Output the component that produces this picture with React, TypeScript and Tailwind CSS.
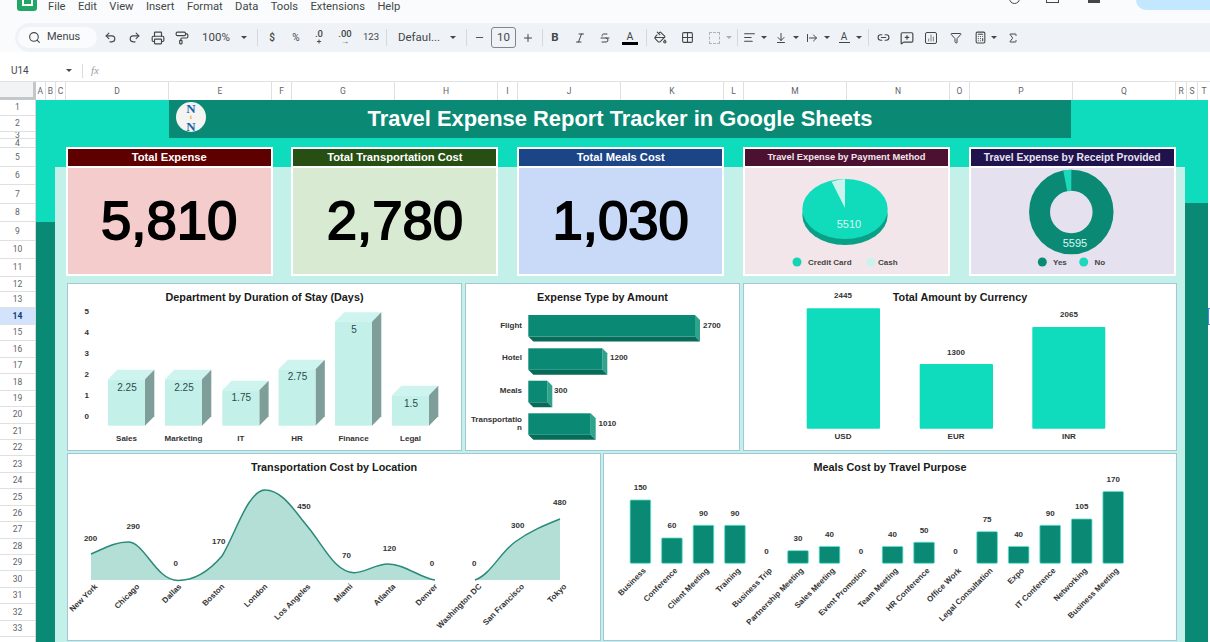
import React from "react";
import {
  Undo2, Redo2, Printer, PaintRoller, Search, Minus, Plus, Italic, Strikethrough, PaintBucket, Grid2x2,
  AlignLeft, ArrowDownToLine, ArrowRightFromLine, Link2, MessageSquarePlus, ChartNoAxesColumn, Filter, Calculator, Sigma,
} from "lucide-react";

const DARK = "#0a8a74";
const FONT = "'Liberation Sans', Arial, sans-serif";

const Caret = ({ c = "" }: { c?: string }) => (
  <div className={`shrink-0 flex justify-center w-[8px] ${c}`}>
    <div className="w-0 h-0 border-x-[3px] border-x-transparent border-t-[3px] border-t-[#444746]" />
  </div>
);
const Sep = ({ c = "" }: { c?: string }) => <div className={`shrink-0 w-[1px] h-[17px] bg-[#d5d9de] ${c}`} />;
const T = ({ c = "", children }: { c?: string; children: React.ReactNode }) => (
  <div className={`shrink-0 flex items-center justify-center text-[#444746] ${c}`}>{children}</div>
);

const columns = [
  ["A", "w-[10.5px]"], ["B", "w-[10px]"], ["C", "w-[10px]"], ["D", "w-[103px]"], ["E", "w-[103px]"], ["F", "w-[20px]"],
  ["G", "w-[103px]"], ["H", "w-[103px]"], ["I", "w-[20px]"], ["J", "w-[103px]"], ["K", "w-[103px]"], ["L", "w-[20px]"],
  ["M", "w-[103px]"], ["N", "w-[103px]"], ["O", "w-[20px]"], ["P", "w-[103px]"], ["Q", "w-[103px]"], ["R", "w-[11px]"],
  ["S", "w-[11px]"], ["T", "w-[13px]"],
];

const rowHeights = ["h-[16px]", "h-[16px]", "h-[7px]", "h-[9px]", "h-[19px]", "h-[18px]", "h-[19px]", "h-[18px]", "h-[19px]", "h-[18px]", "h-[18px]", "h-[15px]"];
const rows = Array.from({ length: 33 }, (_, i) => ({ n: i + 1, h: rowHeights[i] ?? "h-[16.45px]" }));

const Kpi = ({ title, value, head, body }: { title: string; value: string; head: string; body: string }) => (
  <div className="w-[207px] h-[129px] shrink-0 border-2 border-white bg-white flex flex-col">
    <div className={`h-[17px] shrink-0 flex items-center justify-center text-white font-bold text-[11.2px] ${head}`}>{title}</div>
    <div className={`mt-[2px] flex-1 flex items-center justify-center text-black text-[54.5px] font-normal [-webkit-text-stroke:1.8px_black] leading-none ${body}`}>{value}</div>
  </div>
);

const L = (p: React.SVGProps<SVGTextElement>) => (
  <text textAnchor="middle" dominantBaseline="central" fontSize={8} fontWeight={700} fill="#333" fontFamily={FONT} {...p} />
);

const Chart = ({ title, c, vb, children }: { title: string; c: string; vb: string; children: React.ReactNode }) => {
  const [, , w, h] = vb.split(" ");
  return (
    <div className={`shrink-0 h-full bg-white border border-[#a3c6d8] flex flex-col ${c}`}>
      <div className="h-[26px] shrink-0 flex items-center justify-center text-[10.8px] font-bold text-[#1a1a1a]">{title}</div>
      <svg viewBox={vb} width={w} height={h} className="block overflow-visible">{children}</svg>
    </div>
  );
};

const dept = [
  { n: "Sales", v: "2.25", x: 108, t: 379.3, vy: 387 },
  { n: "Marketing", v: "2.25", x: 165, t: 379.3, vy: 387 },
  { n: "IT", v: "1.75", x: 222.3, t: 390.3, vy: 397.5 },
  { n: "HR", v: "2.75", x: 278.5, t: 369.3, vy: 376.5 },
  { n: "Finance", v: "5", x: 335, t: 321.7, vy: 329 },
  { n: "Legal", v: "1.5", x: 392, t: 395.3, vy: 403 },
];
const expense = [
  { n: "Flight", v: "2700", x2: 695, y: 315, ly: 325, vx: 703 },
  { n: "Hotel", v: "1200", x2: 602.3, y: 348.3, ly: 357, vx: 610 },
  { n: "Meals", v: "300", x2: 547.3, y: 380.7, ly: 390.5, vx: 554 },
  { n: "", v: "1010", x2: 590.7, y: 413.3, ly: 423, vx: 598.5 },
];
const locVals: [string, number, number][] = [
  ["200", 90.6, 538], ["290", 133.3, 526.7], ["0", 175.7, 563.7], ["170", 218.8, 541.7], ["450", 304, 506.7], ["70", 346.4, 555],
  ["120", 389.5, 548.7], ["0", 432, 563.7], ["0", 474.3, 563.7], ["300", 517.8, 525.3], ["480", 559.8, 502.7],
];
const locNames: [string, number][] = [
  ["New York", 95], ["Chicago", 137], ["Dallas", 179], ["Boston", 222], ["London", 265], ["Los Angeles", 308], ["Miami", 350],
  ["Atlanta", 393], ["Denver", 435], ["Washington DC", 479], ["San Francisco", 521.6], ["Tokyo", 564],
];
const meals: [string, number][] = [
  ["Business", 150], ["Conference", 60], ["Client Meeting", 90], ["Training", 90], ["Business Trip", 0], ["Partnership Meeting", 30],
  ["Sales Meeting", 40], ["Event Promotion", 0], ["Team Meeting", 40], ["HR Conference", 50], ["Office Work", 0], ["Legal Consultation", 75],
  ["Expo", 40], ["IT Conference", 90], ["Networking", 105], ["Business Meeting", 170],
];

export default function App() {
  return (
    <div className="w-[1210px] h-[642px] overflow-hidden bg-white flex flex-col font-['Liberation_Sans',Arial,sans-serif]">
      {/* Menu bar */}
      <div className="h-[23px] shrink-0 bg-[#f9fbfd] flex items-start font-['Roboto',sans-serif]">
        <div className="ml-[17px] w-[20px] h-[11px] rounded-b-[3px] bg-[#23a566] flex justify-center">
          <div className="w-[11px] h-[6px] border-x-2 border-b-2 border-white" />
        </div>
        <div className="ml-[11px] flex gap-[12.4px] text-[11.2px] leading-[14px] text-[#444746]">
          {["File", "Edit", "View", "Insert", "Format", "Data", "Tools", "Extensions", "Help"].map((m) => <span key={m}>{m}</span>)}
        </div>
        <div className="ml-auto flex items-start">
          <div className="w-[11px] h-[4px] overflow-hidden"><div className="w-[11px] h-[11px] -mt-[7px] rounded-full border-[1.5px] border-[#444746]" /></div>
          <div className="ml-[26px] w-[13px] h-[3px] border-x-[1.5px] border-b-[1.5px] border-[#444746]" />
          <div className="ml-[29px] w-[12px] h-[3px] bg-[#444746]" />
          <div className="ml-[36px] w-[74px] h-[10px] rounded-bl-[10px] bg-[#c2e7ff]" />
        </div>
      </div>

      {/* Toolbar */}
      <div className="h-[29px] shrink-0 bg-[#f9fbfd] pl-[15px]">
        <div className="h-full rounded-l-[15px] bg-[#eff3f8] flex items-center font-['Roboto',sans-serif] text-[11.5px]">
          <div className="ml-[3px] w-[79px] h-[21px] rounded-full bg-[#f9fbfd] flex items-center pl-[10px] gap-[6px] text-[#444746] shrink-0">
            <Search size={13} /><span className="text-[11px]">Menus</span>
          </div>
          <T c="w-[24px] ml-[1px]"><Undo2 size={13} /></T>
          <T c="w-[24px]"><Redo2 size={13} /></T>
          <T c="w-[24px]"><Printer size={14} /></T>
          <T c="w-[24px]"><PaintRoller size={14} /></T>
          <T c="w-[40px] ml-[2px]">100%</T>
          <Caret c="ml-[4px]" />
          <Sep c="ml-[9px]" />
          <T c="w-[20px] ml-[4px] text-[10px] font-medium">$</T>
          <T c="w-[20px] ml-[4px] text-[10px]">%</T>
          <T c="w-[20px] ml-[3px] flex-col text-[9.5px] font-medium leading-[8px]"><span>.0</span><span className="text-[8px]">+</span></T>
          <T c="w-[24px] ml-[4px] flex-col text-[9.5px] font-medium leading-[8px]"><span>.00</span><span className="text-[8px]">→</span></T>
          <T c="w-[24px] ml-[2px] text-[9.5px]">123</T>
          <Sep c="ml-[3px]" />
          <T c="w-[56px] ml-[4px]">Defaul...</T>
          <Caret c="ml-[2px]" />
          <Sep c="ml-[9px]" />
          <T c="w-[16px] ml-[4px]"><Minus size={11} /></T>
          <T c="w-[25px] h-[21px] ml-[4px] border border-[#80868b] rounded-[3px] text-[11.5px]">10</T>
          <T c="w-[16px] ml-[4px]"><Plus size={12} /></T>
          <Sep c="ml-[6px]" />
          <T c="w-[20px] ml-[2px] font-bold text-[11.5px]">B</T>
          <T c="w-[20px] ml-[5px]"><Italic size={12} /></T>
          <T c="w-[20px] ml-[5px]"><Strikethrough size={12} /></T>
          <T c="w-[20px] ml-[5px] flex-col">
            <span className="text-[10.5px] leading-[11px]">A</span>
            <div className="w-[16px] h-[3px] bg-black" />
          </T>
          <Sep c="ml-[6px]" />
          <T c="w-[20px] ml-[3px]"><PaintBucket size={13} /></T>
          <T c="w-[20px] ml-[7px]"><Grid2x2 size={13} /></T>
          <T c="w-[20px] ml-[7px]"><div className="w-[11px] h-[12px] border border-dashed border-[#b0b5ba]" /></T>
          <Caret c="ml-[1px] opacity-40" />
          <Sep c="ml-[4px]" />
          <T c="w-[16px] ml-[3px]"><AlignLeft size={13} /></T>
          <Caret c="ml-[3px]" />
          <T c="w-[16px] ml-[5px]"><ArrowDownToLine size={12} /></T>
          <Caret c="ml-[3px]" />
          <T c="w-[16px] ml-[4px]"><ArrowRightFromLine size={12} /></T>
          <Caret c="ml-[3px]" />
          <T c="w-[16px] ml-[5px] flex-col">
            <span className="text-[10px] leading-[10px]">A</span>
            <div className="w-[11px] h-[1.5px] bg-[#444746]" />
          </T>
          <Caret c="ml-[3px]" />
          <Sep c="ml-[5px]" />
          <T c="w-[20px] ml-[4px]"><Link2 size={13} /></T>
          <T c="w-[20px] ml-[4px]"><MessageSquarePlus size={14} /></T>
          <T c="w-[20px] ml-[4px]"><div className="w-[12px] h-[12px] rounded-[2px] border border-[#444746] flex items-center justify-center"><ChartNoAxesColumn size={8} /></div></T>
          <T c="w-[20px] ml-[5px]"><Filter size={12} /></T>
          <T c="w-[20px] ml-[4px]"><Calculator size={13} /></T>
          <Caret />
          <T c="w-[16px] ml-[7px]"><Sigma size={12} /></T>
        </div>
      </div>

      {/* Formula bar */}
      <div className="h-[29px] shrink-0 bg-white flex items-center pt-[8px] font-['Roboto',sans-serif]">
        <span className="ml-[11px] w-[54px] text-[10px] text-[#444746]">U14</span>
        <Caret />
        <div className="ml-[9px] w-[1px] h-[14px] bg-[#dadce0]" />
        <span className="ml-[8px] text-[11px] italic text-[#9aa0a6] font-['Liberation_Serif',serif]">fx</span>
      </div>

      {/* Column header */}
      <div className="h-[19px] shrink-0 flex bg-white border-t border-[#dfe1e4] text-[8.5px] text-[#5f6368] font-['Roboto',sans-serif]">
        <div className="w-[35.5px] shrink-0 bg-[#f1f3f4] border-r-[3px] border-b-[3px] border-[#c4c7c9]" />
        {columns.map(([l, w]) => (
          <div key={l} className={`${w} shrink-0 flex items-center justify-center border-r border-[#e0e0e0]`}>{l}</div>
        ))}
      </div>

      {/* Sheet */}
      <div className="flex-1 min-h-0 flex">
        <div className="w-[36px] shrink-0 flex flex-col font-['Roboto',sans-serif] text-[8.5px] text-[#5f6368] border-r border-[#d5d7d9]">
          {rows.map((r) => (
            <div key={r.n} className={`${r.h} shrink-0 overflow-hidden flex items-center justify-center border-b border-[#e0e0e0] ${r.n === 14 ? "bg-[#d3e3fd] font-bold text-[#0b3d74]" : "bg-white"}`}>{r.n}</div>
          ))}
        </div>

        <div className="w-[1172px] shrink-0 bg-[#0fdcbc] flex flex-col">
          <div className="h-[38px] shrink-0 pl-[133px]">
            <div className="w-[902px] h-full bg-[#0a8a74] flex items-center">
              <div className="ml-[7px] mb-[4px] w-[30px] h-[30px] shrink-0 rounded-full bg-[#f4f5f3] flex flex-col items-center justify-center font-['Liberation_Serif',serif] font-bold text-[#1c5fa8] leading-[9px] text-[13px]">
                <span>N</span><span className="text-[7px] text-[#f0a820]">t</span><span>N</span>
              </div>
              <div className="flex-1 pr-[37px] text-center text-white font-bold text-[21.9px] leading-none">Travel Expense Report Tracker in Google Sheets</div>
            </div>
          </div>
          <div className="h-[29px] shrink-0" />
          <div className="flex-1 min-h-0 flex">
            <div className="w-[19px] shrink-0 flex flex-col">
              <div className="h-[55px] shrink-0" />
              <div className="flex-1 bg-[#0a8a74]" />
            </div>
            <div className="w-[1130px] shrink-0 bg-[#c3f1e9] flex flex-col">
              <div className="-mt-[20px] ml-[10.7px] flex gap-[18.75px] shrink-0">
                <Kpi title="Total Expense" value="5,810" head="bg-[#5f0000]" body="bg-[#f4cccc]" />
                <Kpi title="Total Transportation Cost" value="2,780" head="bg-[#274e13]" body="bg-[#d9ead3]" />
                <Kpi title="Total Meals Cost" value="1,030" head="bg-[#1c4587]" body="bg-[#c9daf8]" />
                <div className="w-[207px] h-[129px] shrink-0 border-2 border-white bg-white flex flex-col">
                  <div className="h-[17px] shrink-0 flex items-center justify-center text-[#f3e6ea] font-bold text-[9.3px] bg-[#4c1130]">Travel Expense by Payment Method</div>
                  <svg viewBox="745 168 203 106" width="203" height="106" className="block mt-[2px] bg-[#f3e6ea]">
                    <ellipse cx="845" cy="215" rx="42.7" ry="30" fill="#0aa088" />
                    <ellipse cx="845" cy="209" rx="42.7" ry="30" fill="#10dcbc" />
                    <polygon points="845,208 831.7,181.7 838,180 845,179" fill="#c9f3ec" />
                    <text x="849" y="224" textAnchor="middle" dominantBaseline="central" fontSize="11" fill="#d8f8f2" fontFamily={FONT}>5510</text>
                    <circle cx="797" cy="262" r="4.5" fill="#16d3b5" />
                    <L x="808" y="262" textAnchor="start" fill="#444">Credit Card</L>
                    <circle cx="870.7" cy="262" r="4.5" fill="#c9f3ec" />
                    <L x="878" y="262" textAnchor="start" fill="#444">Cash</L>
                  </svg>
                </div>
                <div className="w-[207px] h-[129px] shrink-0 border-2 border-white bg-white flex flex-col">
                  <div className="h-[17px] shrink-0 flex items-center justify-center text-[#e8e4f0] font-bold text-[10.3px] bg-[#20124d]">Travel Expense by Receipt Provided</div>
                  <svg viewBox="971 168 203 106" width="203" height="106" className="block mt-[2px] bg-[#e5e1ee]">
                    <circle cx="1071.3" cy="212" r="31.75" fill="none" stroke="#0a8a74" strokeWidth="21" />
                    <path d="M1065.2 180.8 A31.75 31.75 0 0 1 1071.3 180.25" fill="none" stroke="#1dd9bb" strokeWidth="21" />
                    <text x="1075" y="243" textAnchor="middle" dominantBaseline="central" fontSize="11" fill="#d8f8f2" fontFamily={FONT}>5595</text>
                    <circle cx="1042.3" cy="262" r="4.5" fill="#0a8a74" />
                    <L x="1053" y="262" textAnchor="start" fill="#444">Yes</L>
                    <circle cx="1083.7" cy="262" r="4.5" fill="#1dd9bb" />
                    <L x="1094.6" y="262" textAnchor="start" fill="#444">No</L>
                  </svg>
                </div>
              </div>

              <div className="mt-[7px] ml-[12px] h-[168px] shrink-0 flex gap-[3px]">
                <Chart title="Department by Duration of Stay (Days)" c="w-[395px]" vb="68 310 393 140">
                  {["5", "4", "3", "2", "1", "0"].map((n, i) => <L key={n} x="86.7" y={311.7 + i * 20.9}>{n}</L>)}
                  {dept.map((d) => {
                    const x2 = d.x + 37;
                    return (
                      <g key={d.n}>
                        <polygon points={`${d.x},${d.t} ${d.x + 9.3},${d.t - 9.5} ${x2 + 9.3},${d.t - 9.5} ${x2},${d.t}`} fill="#cdf4ee" />
                        <polygon points={`${x2},${d.t} ${x2 + 9.3},${d.t - 9.5} ${x2 + 9.3},416.2 ${x2},425.7`} fill="#7f9e99" />
                        <rect x={d.x} y={d.t} width="37" height={425.7 - d.t} fill="#c3f1ea" />
                        <text x={d.x + 19} y={d.vy} textAnchor="middle" dominantBaseline="central" fontSize="10" fill="#2f4a4a" fontFamily={FONT}>{d.v}</text>
                        <L x={d.x + 18.5} y="438">{d.n}</L>
                      </g>
                    );
                  })}
                </Chart>
                <Chart title="Expense Type by Amount" c="w-[275px]" vb="466 310 273 140">
                  {expense.map((e) => {
                    const y2 = e.y + 21.5;
                    return (
                      <g key={e.v}>
                        <polygon points={`${e.x2},${e.y} ${e.x2 + 5},${e.y + 5} ${e.x2 + 5},${y2 + 5} ${e.x2},${y2}`} fill="#2fa38c" />
                        <polygon points={`528.3,${y2} 533.3,${y2 + 5} ${e.x2 + 5},${y2 + 5} ${e.x2},${y2}`} fill="#066b58" />
                        <rect x="528.3" y={e.y} width={e.x2 - 528.3} height="21.5" fill={DARK} />
                        {e.n && <L x="522" y={e.ly} textAnchor="end">{e.n}</L>}
                        <L x={e.vx} y={e.ly} textAnchor="start">{e.v}</L>
                      </g>
                    );
                  })}
                  <L x="522" y="419.5" textAnchor="end">Transportatio</L>
                  <L x="522" y="427.5" textAnchor="end">n</L>
                </Chart>
                <Chart title="Total Amount by Currency" c="w-[434px]" vb="744 310 432 140">
                  <rect x="806.7" y="308.3" width="73.3" height="120.4" rx="1" fill="#0fdcbc" />
                  <rect x="919.7" y="364" width="73.3" height="64.7" rx="1" fill="#0fdcbc" />
                  <rect x="1032.3" y="327" width="73" height="101.7" rx="1" fill="#0fdcbc" />
                  <L x="843" y="295.7">2445</L>
                  <L x="956" y="352.7">1300</L>
                  <L x="1069" y="314.7">2065</L>
                  <L x="843" y="436">USD</L>
                  <L x="956" y="436">EUR</L>
                  <L x="1069" y="436">INR</L>
                </Chart>
              </div>

              <div className="mt-[2px] ml-[12px] h-[188px] shrink-0 flex gap-[2px]">
                <Chart title="Transportation Cost by Location" c="w-[534px]" vb="68 480 532 160">
                  <path d="M91,554 C105,548 115,542 128,542 C145,542 155,580 178,580.5 C195,580.5 210,570 222,556 C235,535 248,490 265,490 C283,490 295,512 308,527 C325,548 335,572 354,572.7 C365,573 375,564 388,564 C405,564 420,578 435,580 L475,580 C490,575 500,553 515,542 C530,531 545,525 560,519 L560,580 L91,580 Z" fill="#b3dfd6" />
                  <path d="M91,554 C105,548 115,542 128,542 C145,542 155,580 178,580.5 C195,580.5 210,570 222,556 C235,535 248,490 265,490 C283,490 295,512 308,527 C325,548 335,572 354,572.7 C365,573 375,564 388,564 C405,564 420,578 435,580 M475,580 C490,575 500,553 515,542 C530,531 545,525 560,519" fill="none" stroke="#2a8a79" strokeWidth="1.5" />
                  {locVals.map(([v, x, y]) => <L key={`${v}${x}`} x={x} y={y}>{v}</L>)}
                  {locNames.map(([n, x]) => (
                    <text key={n} x={x + 3} y="587" textAnchor="end" fontSize="8" fontWeight="700" fill="#333" fontFamily={FONT} transform={`rotate(-45 ${x + 3} 587)`}>{n}</text>
                  ))}
                </Chart>
                <Chart title="Meals Cost by Travel Purpose" c="w-[574px]" vb="604 480 572 160">
                  {meals.map(([n, v], i) => {
                    const cx = 640.4 + i * 31.52;
                    const h = v * 0.4222;
                    return (
                      <g key={n}>
                        {v > 0 && <rect x={cx - 10.3} y={563.3 - h} width="20.6" height={h} rx="1" fill={DARK} stroke="#5fe0cb" strokeWidth="0.8" />}
                        <L x={cx} y={v > 0 ? 551.3 - h : 551.3}>{String(v)}</L>
                        <text x={cx + 6} y="571" textAnchor="end" fontSize="8" fontWeight="700" fill="#333" fontFamily={FONT} transform={`rotate(-45 ${cx + 6} 571)`}>{n}</text>
                      </g>
                    );
                  })}
                </Chart>
              </div>
            </div>
            <div className="w-[23px] shrink-0 flex flex-col">
              <div className="h-[36px] shrink-0" />
              <div className="flex-1 bg-[#0a8a74]" />
            </div>
          </div>
        </div>
        <div className="w-[2px] shrink-0 pt-[208px]">
          <div className="w-[2px] h-[17px] border-y border-l border-[#4285f4]" />
        </div>
      </div>
    </div>
  );
}
